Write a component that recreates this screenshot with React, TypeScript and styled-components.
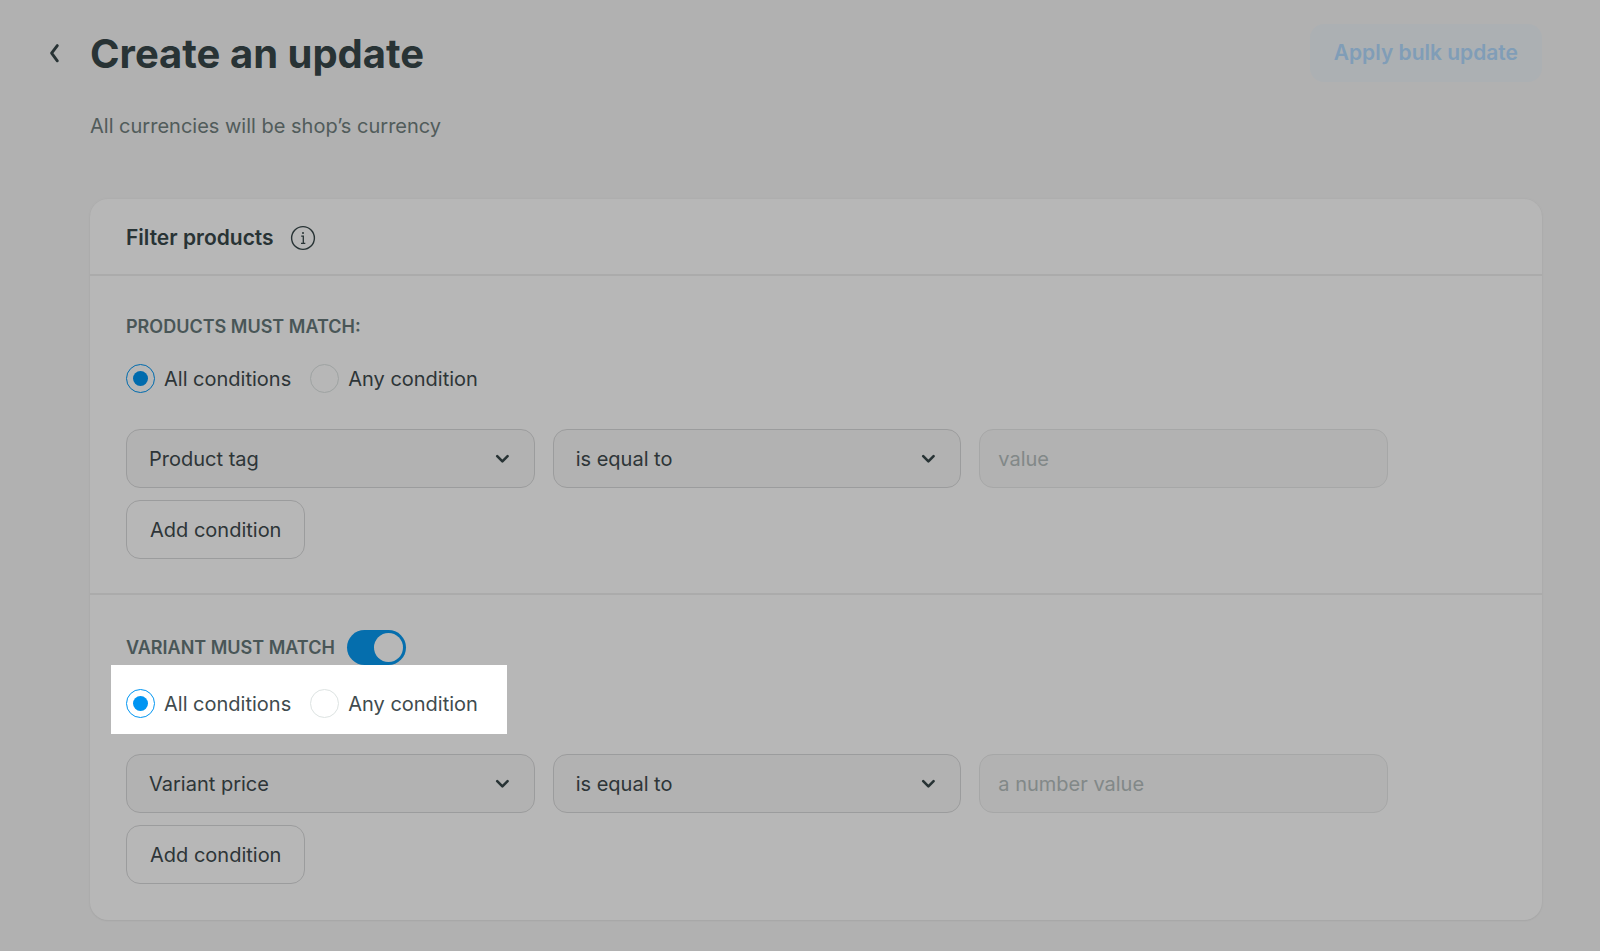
import React, { useId, useState } from 'react';
import styled, { createGlobalStyle, css } from 'styled-components';

const color = {
  page: '#f7f7f7',
  card: '#ffffff',
  field: '#f8f8f8',
  heading: '#38484a',
  text: '#404b4e',
  label: '#66787a',
  muted: '#72817f',
  placeholder: '#b5bebe',
  divider: '#eeefef',
  border: '#d9dadb',
  borderSoft: '#e8e9e9',
  accent: '#0095f2',
  accentDark: '#089af2',
};

const GlobalStyle = createGlobalStyle`
  *, *::before, *::after { box-sizing: border-box; }
  body {
    margin: 0;
    background: ${color.page};
    color: ${color.text};
    font-family: Inter, "Liberation Sans", sans-serif;
    font-size: 20px;
    line-height: 24px;
  }
  button, input, select { font: inherit; color: inherit; margin: 0; }
`;

const Page = styled.main`
  min-height: 100vh;
  padding: 24px 58px 31px 42px;
  overflow: clip;
`;

const Header = styled.header`
  display: flex;
  align-items: center;
  min-height: 58px;
`;

const BackButton = styled.button`
  display: flex;
  align-items: center;
  justify-content: center;
  width: 24px;
  height: 32px;
  margin-right: 24px;
  padding: 0;
  border: 0;
  background: none;
  color: ${color.heading};
`;

const Title = styled.h1`
  flex: 1;
  margin: 0;
  padding-top: 2px;
  font-size: 40px;
  line-height: 48px;
  font-weight: 700;
  color: ${color.heading};
`;

const ApplyButton = styled.button`
  height: 58px;
  padding: 0 24px;
  border: 0;
  border-radius: 14px;
  background: #f0f6fa;
  color: #b3dbff;
  font-size: 21px;
  font-weight: 600;
`;

const Content = styled.div`
  padding-left: 48px;
`;

const Intro = styled.p`
  margin: 32px 0 61px;
  color: ${color.muted};
`;

const Card = styled.section`
  border-radius: 18px;
  background: ${color.card};
  box-shadow: 0 0 3px rgba(0, 0, 0, 0.05), 0 1px 2px rgba(0, 0, 0, 0.05);
`;

const CardHeader = styled.div`
  display: flex;
  align-items: center;
  gap: 16px;
  height: 75px;
  padding: 2px 36px 0;
`;

const CardTitle = styled.h2`
  margin: 0;
  font-size: 21px;
  line-height: 24px;
  font-weight: 600;
  color: ${color.heading};
`;

const InfoButton = styled.button`
  display: flex;
  padding: 0;
  border: 0;
  background: none;
  color: ${color.heading};
`;

const Section = styled.div`
  padding: 35px 36px 34px;
  border-top: 2px solid ${color.divider};

  &:last-child {
    padding-bottom: 36px;
  }
`;

const SectionHeading = styled.div`
  display: flex;
  align-items: center;
  gap: 12px;
`;

const SectionTitle = styled.h3`
  margin: 0;
  font-size: 18px;
  line-height: 32px;
  font-weight: 600;
  text-transform: uppercase;
  color: ${color.label};
`;

const Toggle = styled.input`
  appearance: none;
  display: flex;
  width: 59px;
  height: 35px;
  padding: 3px;
  border-radius: 18px;
  background: #bcc4c6;

  &::before {
    content: '';
    width: 29px;
    height: 29px;
    border-radius: 50%;
    background: #fff;
  }

  &:checked {
    justify-content: flex-end;
    background: ${color.accentDark};
  }
`;

const RadioGroup = styled.div<{ $spotlight?: boolean }>`
  display: flex;
  gap: 19px;
  width: fit-content;
  margin: 0 -15px 20px;
  padding: 21px 15px 16px;

  ${({ $spotlight }) =>
    $spotlight &&
    css`
      position: relative;
      z-index: 1;
      padding: 24px 29px 16px 15px;
      background: #fff;
      box-shadow: 0 0 0 200vmax rgba(0, 0, 0, 0.282);
    `}
`;

const RadioLabel = styled.label`
  display: flex;
  align-items: center;
  gap: 9px;
`;

const Radio = styled.input`
  appearance: none;
  display: grid;
  place-items: center;
  width: 29px;
  height: 29px;
  border: 1px solid #dde3e2;
  border-radius: 50%;

  &:checked {
    border-color: ${color.accent};
  }

  &:checked::before {
    content: '';
    width: 15px;
    height: 15px;
    border-radius: 50%;
    background: ${color.accent};
  }
`;

const FieldRow = styled.div`
  display: grid;
  grid-template-columns: repeat(3, 1fr);
  gap: 18px;
  margin-bottom: 12px;
  padding-right: 118px;
`;

const field = css`
  width: 100%;
  height: 59px;
  border: 1px solid ${color.border};
  border-radius: 14px;
  background: ${color.field};
`;

const SelectBox = styled.div`
  display: grid;
  align-items: center;

  > * {
    grid-area: 1 / 1;
  }

  > svg {
    justify-self: end;
    margin-right: 24px;
    pointer-events: none;
    color: ${color.heading};
  }
`;

const Select = styled.select`
  ${field}
  appearance: none;
  padding: 0 48px 0 22px;
`;

const TextInput = styled.input`
  ${field}
  padding: 0 18px;
  border-color: ${color.borderSoft};

  &::placeholder {
    color: ${color.placeholder};
    opacity: 1;
  }
`;

const AddButton = styled.button`
  height: 59px;
  padding: 0 23px;
  border: 1px solid ${color.border};
  border-radius: 14px;
  background: none;
`;

const BackIcon = () => (
  <svg width="12" height="20" viewBox="0 0 12 20" fill="none" stroke="currentColor" strokeWidth="2.9" strokeLinecap="round" strokeLinejoin="round" aria-hidden="true">
    <path d="M9.3 2.6 3.6 10.2l5.7 7.6" />
  </svg>
);

const ChevronIcon = () => (
  <svg width="16" height="12" viewBox="0 0 16 12" fill="none" stroke="currentColor" strokeWidth="2.6" strokeLinecap="round" strokeLinejoin="round" aria-hidden="true">
    <path d="M2.2 3.2 7.4 8.4l5.2-5.2" />
  </svg>
);

const InfoIcon = () => (
  <svg width="26" height="26" viewBox="0 0 26 26" fill="none" stroke="currentColor" aria-hidden="true">
    <circle cx="13" cy="13" r="11.4" strokeWidth="1.4" />
    <path d="M11.2 11.2h2.1v7M11 18.4h4.3" strokeWidth="1.3" />
    <circle cx="13" cy="8" r="1" fill="currentColor" stroke="none" />
  </svg>
);

interface MatchOptionsProps {
  legend: string;
  spotlight?: boolean;
}

const MatchOptions = ({ legend, spotlight }: MatchOptionsProps) => {
  const name = useId();
  const [value, setValue] = useState('all');
  return (
    <RadioGroup role="radiogroup" aria-label={legend} $spotlight={spotlight}>
      <RadioLabel>
        <Radio type="radio" name={name} checked={value === 'all'} onChange={() => setValue('all')} />
        All conditions
      </RadioLabel>
      <RadioLabel>
        <Radio type="radio" name={name} checked={value === 'any'} onChange={() => setValue('any')} />
        Any condition
      </RadioLabel>
    </RadioGroup>
  );
};

interface ConditionProps {
  fieldName: string;
  placeholder: string;
}

const Condition = ({ fieldName, placeholder }: ConditionProps) => (
  <>
    <FieldRow>
      <SelectBox>
        <Select aria-label="Field">
          <option>{fieldName}</option>
        </Select>
        <ChevronIcon />
      </SelectBox>
      <SelectBox>
        <Select aria-label="Operator">
          <option>is equal to</option>
        </Select>
        <ChevronIcon />
      </SelectBox>
      <TextInput type="text" aria-label="Value" placeholder={placeholder} />
    </FieldRow>
    <AddButton type="button">Add condition</AddButton>
  </>
);

export default function App() {
  const [variants, setVariants] = useState(true);
  return (
    <>
      <GlobalStyle />
      <Page>
        <Header>
          <BackButton type="button" aria-label="Back">
            <BackIcon />
          </BackButton>
          <Title>Create an update</Title>
          <ApplyButton type="button">Apply bulk update</ApplyButton>
        </Header>
        <Content>
          <Intro>All currencies will be shop’s currency</Intro>
          <Card>
            <CardHeader>
              <CardTitle>Filter products</CardTitle>
              <InfoButton type="button" aria-label="About filters">
                <InfoIcon />
              </InfoButton>
            </CardHeader>
            <Section>
              <SectionHeading>
                <SectionTitle>Products must match:</SectionTitle>
              </SectionHeading>
              <MatchOptions legend="Products must match" />
              <Condition fieldName="Product tag" placeholder="value" />
            </Section>
            <Section>
              <SectionHeading>
                <SectionTitle id="variant-title">Variant must match</SectionTitle>
                <Toggle
                  type="checkbox"
                  role="switch"
                  aria-labelledby="variant-title"
                  checked={variants}
                  onChange={(e) => setVariants(e.target.checked)}
                />
              </SectionHeading>
              <MatchOptions legend="Variant must match" spotlight />
              <Condition fieldName="Variant price" placeholder="a number value" />
            </Section>
          </Card>
        </Content>
      </Page>
    </>
  );
}
